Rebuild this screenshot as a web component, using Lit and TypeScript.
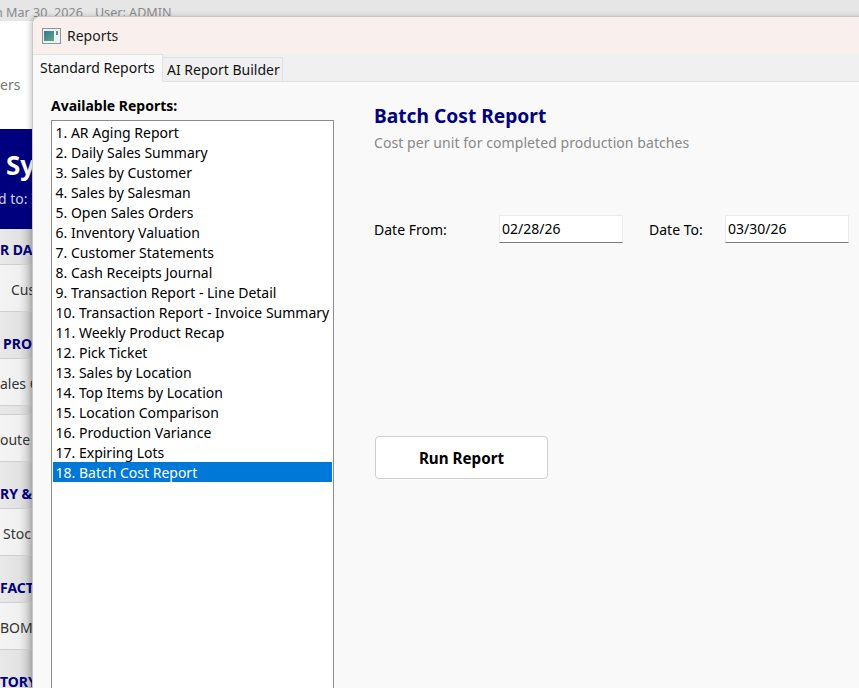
import { LitElement, html, css } from "lit";
import { customElement, state } from "lit/decorators.js";

const REPORTS = [
	"AR Aging Report",
	"Daily Sales Summary",
	"Sales by Customer",
	"Sales by Salesman",
	"Open Sales Orders",
	"Inventory Valuation",
	"Customer Statements",
	"Cash Receipts Journal",
	"Transaction Report - Line Detail",
	"Transaction Report - Invoice Summary",
	"Weekly Product Recap",
	"Pick Ticket",
	"Sales by Location",
	"Top Items by Location",
	"Location Comparison",
	"Production Variance",
	"Expiring Lots",
	"Batch Cost Report",
];

const SIDE_ROWS = [
	{ text: "R DA", head: true, h: 36, pad: 0 },
	{ text: "Cus", head: false, h: 47, pad: 11 },
	{ text: "PRO", head: true, h: 47, pad: 3 },
	{ text: "ales C", head: false, h: 47, pad: 0 },
	{ text: "", head: true, h: 9, pad: 0 },
	{ text: "oute", head: false, h: 47, pad: 0 },
	{ text: "RY &", head: true, h: 47, pad: 0 },
	{ text: "Stoc", head: false, h: 47, pad: 3 },
	{ text: "FACT", head: true, h: 47, pad: 0 },
	{ text: "BOM", head: false, h: 47, pad: 0 },
	{ text: "TORY", head: true, h: 47, pad: 0 },
];

@customElement("app-root")
export class AppRoot extends LitElement {
	static styles = css`
		:host {
			display: block;
			position: relative;
			width: 859px;
			height: 688px;
			overflow: hidden;
			background: #fff;
			font-family: "Noto Sans", "Liberation Sans", sans-serif;
			font-size: 14px;
			color: #000;
		}

		/* app behind the dialog */
		.topbar {
			height: 21px;
			box-sizing: border-box;
			padding: 4px 0 0 0;
			background: #e6e6e6;
			color: #8a8a8a;
			font-size: 12.6px;
			line-height: 18px;
			white-space: nowrap;
			display: flex;
			gap: 12px;
		}
		.topbar span:first-child {
			margin-left: -5px;
		}
		.side {
			width: 32px;
			overflow: hidden;
		}
		.ers {
			height: 108px;
			box-sizing: border-box;
			padding-top: 55px;
			color: #777;
			line-height: 18px;
			white-space: nowrap;
			background: #fff;
		}
		.brand {
			height: 100px;
			background: #00007f;
			color: #fff;
			box-sizing: border-box;
			padding-top: 20px;
			white-space: nowrap;
			overflow: hidden;
		}
		.brand b {
			display: block;
			font-size: 26px;
			line-height: 32px;
			padding-left: 6px;
		}
		.brand span {
			display: block;
			font-size: 14px;
			color: #c8d4f0;
			line-height: 18px;
			margin: 9px 0 0 -2px;
		}
		.row {
			display: flex;
			align-items: center;
			box-sizing: border-box;
			padding-top: 4px;
			border-bottom: 1px solid #cfcfcf;
			white-space: nowrap;
			overflow: hidden;
			line-height: 20px;
			background: linear-gradient(90deg, #f4f4f4 0%, #f0f0f0 60%, #c9c9c9 100%);
		}
		.row.head {
			align-items: flex-end;
			padding-top: 0;
			padding-bottom: 4px;
			background: linear-gradient(90deg, #e9e9e9 0%, #e2e2e2 60%, #c4c4c4 100%);
			color: #00007f;
			font-weight: 700;
		}
		.row.plain {
			color: #333;
		}

		/* dialog */
		.window {
			position: absolute;
			left: 32px;
			top: 16px;
			width: 840px;
			height: 690px;
			box-sizing: border-box;
			border: 1px solid #c8c8c8;
			border-radius: 8px 0 0 0;
			background: #f9f9f9;
			display: flex;
			flex-direction: column;
			box-shadow: -2px 0 5px rgba(0, 0, 0, 0.18);
		}
		.titlebar {
			height: 37px;
			flex: none;
			display: flex;
			align-items: center;
			gap: 6px;
			padding-left: 9px;
			background: #f9f0ee;
			border-radius: 8px 0 0 0;
			color: #1a1a1a;
		}
		.titlebar svg {
			display: block;
		}
		.tabs {
			height: 28px;
			flex: none;
			display: flex;
			align-items: flex-end;
			box-sizing: border-box;
			background: #f0f0f0;
			border-bottom: 1px solid #e2e2e2;
		}
		.tab {
			height: 25px;
			box-sizing: border-box;
			padding: 0 2px 0 4px;
			margin-bottom: -1px;
			border: 1px solid #e2e2e2;
			border-left: none;
			line-height: 24px;
			color: #111;
			background: #f0f0f0;
		}
		.tab.active {
			height: 28px;
			width: 130px;
			padding: 0 0 0 7px;
			background: #f9f9f9;
			border-bottom-color: #f9f9f9;
			line-height: 25px;
		}
		.body {
			flex: 1;
			display: flex;
			min-height: 0;
		}
		.left {
			width: 283px;
			margin-left: 18px;
			padding-top: 14px;
			flex: none;
			display: flex;
			flex-direction: column;
		}
		.left h3 {
			margin: 0 0 4px;
			font-size: 14px;
			line-height: 20px;
			font-weight: 700;
		}
		ul {
			list-style: none;
			margin: 0;
			padding: 1px 1px;
			flex: 1;
			background: #fff;
			border: 1px solid #8c8c8c;
		}
		li {
			height: 20px;
			line-height: 21px;
			padding-left: 2.5px;
			white-space: nowrap;
			cursor: default;
		}
		li.selected {
			background: #0078d7;
			color: #fff;
		}
		.right {
			flex: 1;
			padding: 21px 0 0 40px;
		}
		h2 {
			margin: 0;
			color: #00007f;
			font-size: 19.2px;
			line-height: 26px;
			font-weight: 700;
		}
		.sub {
			margin-top: 4px;
			color: #888;
			line-height: 20px;
			letter-spacing: 0.07px;
		}
		.dates {
			margin-top: 62px;
			display: flex;
			align-items: center;
			height: 28px;
		}
		.dates label {
			flex: none;
		}
		.dates label.from {
			width: 125px;
		}
		.dates label.to {
			width: 76px;
			margin-left: 26px;
		}
		input {
			width: 124px;
			height: 28px;
			box-sizing: border-box;
			padding: 0 2px 2px;
			border: 1px solid #ececec;
			border-bottom: 1px solid #7a7a7a;
			background: #fff;
			font: inherit;
			color: #000;
			outline: none;
		}
		button {
			display: block;
			margin: 193px 0 0 1px;
			width: 173px;
			height: 43px;
			background: #fff;
			border: 1px solid #cfcfcf;
			border-radius: 4px;
			font: inherit;
			font-size: 15.2px;
			font-weight: 700;
			color: #000;
		}
	`;

	@state()
	private selected = 17;

	render() {
		return html`
			<div class="topbar"><span>n Mar 30, 2026</span><span>User: ADMIN</span></div>
			<div class="side">
				<div class="ers">ers</div>
				<div class="brand"><b>Sy</b><span>d to: I</span></div>
				${SIDE_ROWS.map(
					(r) => html`<div
						class="row ${r.head ? "head" : "plain"}"
						style="height:${r.h}px;padding-left:${r.pad}px"
					>
						${r.text}
					</div>`
				)}
			</div>
			<div class="window">
				<div class="titlebar">
					<svg width="19" height="16" viewBox="0 0 19 16">
						<defs>
							<linearGradient id="ico" x1="0" y1="0" x2="1" y2="1">
								<stop offset="0" stop-color="#2f7a9c" />
								<stop offset="1" stop-color="#62a878" />
							</linearGradient>
						</defs>
						<rect x="0.5" y="0.5" width="18" height="15" fill="#eef2f3" stroke="#8f9498" />
						<rect x="2" y="3" width="10" height="10" fill="url(#ico)" />
						<rect x="14" y="3" width="2" height="4" fill="#6d8a93" />
					</svg>
					Reports
				</div>
				<div class="tabs">
					<div class="tab active">Standard Reports</div>
					<div class="tab">AI Report Builder</div>
				</div>
				<div class="body">
					<div class="left">
						<h3>Available Reports:</h3>
						<ul>
							${REPORTS.map(
								(name, i) => html`<li
									class=${i === this.selected ? "selected" : ""}
									@click=${() => (this.selected = i)}
								>
									${i + 1}. ${name}
								</li>`
							)}
						</ul>
					</div>
					<div class="right">
						<h2>${REPORTS[this.selected]}</h2>
						<div class="sub">Cost per unit for completed production batches</div>
						<div class="dates">
							<label class="from">Date From:</label>
							<input value="02/28/26" />
							<label class="to">Date To:</label>
							<input value="03/30/26" />
						</div>
						<button>Run Report</button>
					</div>
				</div>
			</div>
		`;
	}
}
